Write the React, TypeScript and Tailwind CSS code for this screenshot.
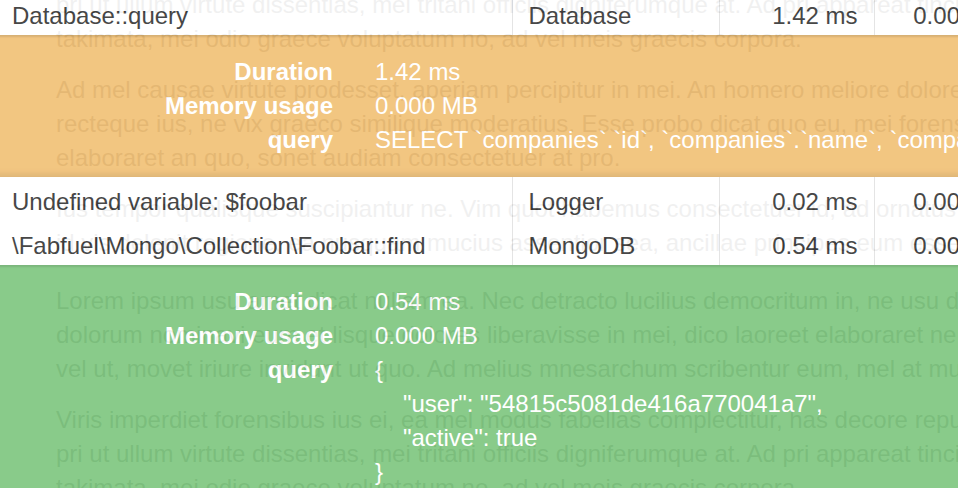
import React from 'react';

// page text that sits behind the profiler table
const paragraphs: { lines: string[]; gap: string }[] = [
  {
    gap: 'mt-[-12px]',
    lines: [
      'pri ut ullum virtute dissentias, mei tritani officiis digniferumque at. Ad pri appareat tincidunt, ex',
      'takimata, mei odio graece voluptatum no, ad vel meis graecis corpora.',
    ],
  },
  {
    gap: 'mt-[17px]',
    lines: [
      'Ad mel causae virtute prodesset, aperiam percipitur in mei. An homero meliore dolorem sit, eos',
      'recteque ius, ne vix graeco similique moderatius. Esse probo dicat quo eu, mei forensibus',
      'elaboraret an quo, sonet audiam consectetuer at pro.',
    ],
  },
  {
    gap: 'mt-[17px]',
    lines: [
      'Ius tempor qualisque suscipiantur ne. Vim quot habemus consectetuer id, ad ornatus scripserit',
      'id vis delenit regione, ea nusquam mucius assentior sea, ancillae principes eum esse',
    ],
  },
  {
    gap: 'mt-[24px]',
    lines: [
      'Lorem ipsum usu amet dicat nullam ea. Nec detracto lucilius democritum in, ne usu delenit offendit',
      'dolorum nominavi eum et lisque dolores liberavisse in mei, dico laoreet elaboraret ne',
      'vel ut, movet iriure invidunt ut quo. Ad melius mnesarchum scribentur eum, mel at mutat',
    ],
  },
  {
    gap: 'mt-[17px]',
    lines: [
      'Viris imperdiet forensibus ius ei, ea mel modus fabellas complectitur, has decore repudiare',
      'pri ut ullum virtute dissentias, mei tritani officiis digniferumque at. Ad pri appareat tincidunt, ex',
      'takimata, mei odio graece voluptatum no, ad vel meis graecis corpora.',
    ],
  },
];

interface DetailProps {
  tone: 'warning' | 'success';
  duration: string;
  memory: string;
  query: React.ReactNode;
}

const Cell = ({ children, align = 'left', first = false }: { children: React.ReactNode; align?: 'left' | 'right'; first?: boolean }) => (
  <td
    className={`px-4 pt-[8px] pb-[2px] whitespace-nowrap overflow-hidden ${first ? '' : 'border-l border-[#e2e2e2]'} ${
      align === 'right' ? 'text-right' : 'text-left'
    }`}
  >
    {children}
  </td>
);

const Detail = ({ tone, duration, memory, query }: DetailProps) => (
  <tr>
    <td
      colSpan={4}
      className={`py-[20px] text-white ${
        tone === 'warning' ? 'bg-[#f2c278]' : 'bg-[#81c882]'
      } shadow-[inset_0_2px_2px_rgba(0,0,0,0.12),inset_0_-6px_6px_-3px_rgba(0,0,0,0.1)]`}
    >
      <div className="grid grid-cols-[337px_1fr] gap-x-[42px]">
        <div className="text-right font-bold">Duration</div>
        <div>{duration}</div>
        <div className="text-right font-bold">Memory usage</div>
        <div>{memory}</div>
        <div className="text-right font-bold">query</div>
        <div className="whitespace-nowrap">{query}</div>
      </div>
    </td>
  </tr>
);

export default function App() {
  return (
    <div className="relative w-[958px] h-[488px] overflow-hidden bg-white font-['Liberation_Sans',Arial,sans-serif] text-[24px] leading-[34px]">
      <div className="pl-[56px] text-[#333]">
        {paragraphs.map((p, i) => (
          <div key={i} className={p.gap}>
            {p.lines.map((line, j) => (
              <div key={j} className="whitespace-nowrap">
                {line}
              </div>
            ))}
          </div>
        ))}
      </div>

      <div className="absolute left-[-4px] top-[-9px] opacity-[0.93]">
        <table className="table-fixed w-[1036px] bg-white text-[#3a3a3a]">
          <colgroup>
            <col className="w-[516px]" />
            <col className="w-[207px]" />
            <col className="w-[155px]" />
            <col className="w-[158px]" />
          </colgroup>
          <tbody>
            <tr>
              <Cell first>Database::query</Cell>
              <Cell>Database</Cell>
              <Cell align="right">1.42 ms</Cell>
              <Cell align="right">0.000 MB</Cell>
            </tr>
            <Detail
              tone="warning"
              duration="1.42 ms"
              memory="0.000 MB"
              query="SELECT `companies`.`id`, `companies`.`name`, `companies`.`created_at` FROM `companies`"
            />
            <tr>
              <Cell first>Undefined variable: $foobar</Cell>
              <Cell>Logger</Cell>
              <Cell align="right">0.02 ms</Cell>
              <Cell align="right">0.000 MB</Cell>
            </tr>
            <tr>
              <Cell first>\Fabfuel\Mongo\Collection\Foobar::find</Cell>
              <Cell>MongoDB</Cell>
              <Cell align="right">0.54 ms</Cell>
              <Cell align="right">0.000 MB</Cell>
            </tr>
            <Detail
              tone="success"
              duration="0.54 ms"
              memory="0.000 MB"
              query={
                <>
                  <div>{'{'}</div>
                  <div className="pl-[28px]">"user": "54815c5081de416a770041a7",</div>
                  <div className="pl-[28px]">"active": true</div>
                  <div>{'}'}</div>
                </>
              }
            />
          </tbody>
        </table>
      </div>
    </div>
  );
}
